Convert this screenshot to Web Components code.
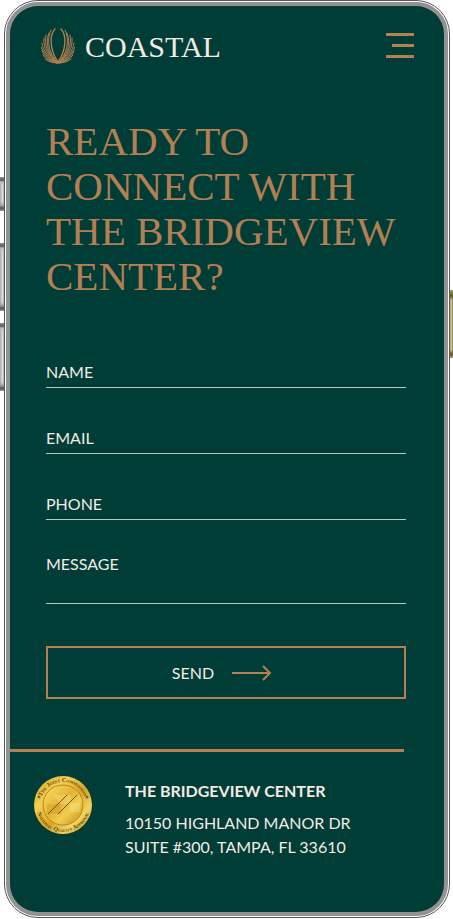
<!DOCTYPE html>
<html lang="en">
<head>
<meta charset="utf-8">
<meta name="viewport" content="width=device-width, initial-scale=1">
<title>Coastal – Contact</title>
<style>
  :root { --green: #003d37; --copper: #b47f52; --cream: #f3ebe3; --rule: #b9c7c2; }
  * { box-sizing: border-box; }
  body { margin: 0; background: #fff; font-family: Lato, "Liberation Sans", sans-serif; font-size: 16px; color: var(--cream); }
</style>
</head>
<body>
<phone-frame>
  <site-header></site-header>
  <main>
    <page-title>READY TO CONNECT WITH THE BRIDGEVIEW CENTER?</page-title>
    <contact-form></contact-form>
  </main>
  <site-footer></site-footer>
</phone-frame>
<script>
const define = (name, html, setup) => {
  const template = document.createElement('template');
  template.innerHTML = html;
  customElements.define(name, class extends HTMLElement {
    constructor() {
      super();
      this.attachShadow({ mode: 'open' }).append(template.content.cloneNode(true));
    }
    connectedCallback() { if (setup) setup(this, this.shadowRoot); }
  });
};

define('phone-frame', `
<style>
  :host { position: relative; min-height: 100vh; padding: 0 3px 1px 4px; box-sizing: border-box; display: flex; }
  .shell { flex: 1; display: flex; border: 1px solid #55555a; border-radius: 34px; background: #fff; padding: 1px; position: relative; min-width: 0; }
  .bezel { flex: 1; display: flex; border: 4px solid #929292; border-radius: 32px; background: #929292; min-width: 0; }
  .screen { flex: 1; background: var(--green); border-radius: 28px; overflow: hidden; min-width: 0; }
  .key { position: absolute; left: 0; width: 5px; box-sizing: border-box;
         background: linear-gradient(#999, #555 3px, #bbb 5px, #0000 9px, #0000 calc(100% - 9px), #999 calc(100% - 5px), #555 calc(100% - 3px), #999), linear-gradient(90deg, #aaa, #ddd 50%, #888); }
  .mute { top: 177px; height: 34px; }
  .up { top: 243px; height: 68px; }
  .down { top: 323px; height: 68px; }
  .power { left: auto; right: 0; width: 4px; top: 290px; height: 68px;
           background: linear-gradient(#a59d5c, #5f5820 6px, #0000 10px, #0000 calc(100% - 8px), #5f5820 calc(100% - 4px), #a59d5c), linear-gradient(90deg, #716a35, #d5cd96 50%, #918542); }
</style>
<i class="key mute"></i><i class="key up"></i><i class="key down"></i><i class="key power"></i>
<div class="shell"><div class="bezel"><div class="screen"><slot></slot></div></div></div>`);

define('coastal-mark', `
<style>:host { display: block; } svg { display: block; fill: none; stroke: var(--copper); stroke-width: 1; stroke-linecap: round; }</style>
<svg width="34" height="36" viewBox="0 0 34 36" aria-hidden="true">
  <defs><g id="half">
    <path d="M14 1C8 7 9 23 17 34" stroke-width="1.3"/>
    <path d="M10 2C5 12 8 26 16 34"/>
    <path d="M8 5C4 14 7 27 16 34"/>
    <path d="M5 7C3 17 7 28 16 34"/>
    <path d="M3 10C2 20 7 29 16 34"/>
    <path d="M1 15C2 23 8 31 16 34"/>
    <path d="M0 19C3 26 9 32 16 35"/>
    <path d="M1 23C4 29 9 33 16 35"/>
    <path d="M2 27C5 31 10 34 16 35"/>
    <path d="M4 31C8 34 12 35 17 35"/>
  </g></defs>
  <use href="#half"/><use href="#half" transform="translate(34) scale(-1 1)"/>
</svg>`);

define('site-header', `
<style>
  :host { display: block; }
  header { display: flex; align-items: center; justify-content: space-between; padding: 22px 30px 0 31px; }
  a { display: flex; align-items: center; gap: 10px; color: var(--cream); text-decoration: none; font: 30px/36px "Liberation Serif", serif; }
  a span { padding-top: 2px; line-height: 34px; }
  button { display: block; border: 0; background: none; padding: 0; color: var(--copper); cursor: pointer; }
  svg { display: block; }
</style>
<header>
  <a href="#home"><coastal-mark></coastal-mark><span>COASTAL</span></a>
  <button type="button" aria-label="Menu"><svg width="28" height="28" fill="currentColor"><path d="M0 1h28v3H0zM6 12h22v3H6zM0 23h28v3H0z"/></svg></button>
</header>`);

define('page-title', `
<style>
  :host { display: block; padding: 55px 36px 0; }
  h1 { margin: 0; color: var(--copper); font: 400 41px/45px "Liberation Serif", serif; }
</style>
<h1><slot></slot></h1>`);

define('form-field', `
<style>
  :host { display: block; }
  div { display: flex; gap: 12px; border-bottom: 1px solid var(--rule); }
  label { line-height: 26px; }
  input, textarea { flex: 1; min-width: 0; height: 28px; margin: 0; padding: 0; box-sizing: border-box; border: 0; outline: 0; background: none; color: inherit; font: inherit; line-height: 26px; resize: none; }
  textarea { height: 52px; }
</style>
<div><label for="control"></label></div>`, (host, root) => {
  const row = root.querySelector('div');
  if (row.children.length > 1) return;
  const type = host.getAttribute('type');
  const control = document.createElement(type === 'message' ? 'textarea' : 'input');
  if (type !== 'message') control.type = type;
  control.id = 'control';
  control.name = host.getAttribute('name');
  row.append(control);
  root.querySelector('label').textContent = host.getAttribute('label');
});

define('contact-form', `
<style>
  :host { display: block; padding: 60px 38px 0 36px; }
  form { display: flex; flex-direction: column; gap: 37px; }
  .last { margin-top: -6px; }
  button { display: flex; align-items: center; justify-content: center; gap: 18px; height: 53px; margin-top: 5px; padding: 0 8px 0 0; border: 2px solid var(--copper); background: none; color: inherit; font: inherit; cursor: pointer; }
  svg { display: block; fill: none; stroke: var(--copper); stroke-width: 2; }
</style>
<form>
  <form-field type="text" name="name" label="NAME"></form-field>
  <form-field type="email" name="email" label="EMAIL"></form-field>
  <form-field type="tel" name="phone" label="PHONE"></form-field>
  <form-field class="last" type="message" name="message" label="MESSAGE"></form-field>
  <button type="submit">SEND <svg width="40" height="16" aria-hidden="true"><path d="M0 8h38M31 1l7 7-7 7"/></svg></button>
</form>`);

define('gold-seal', `
<style>
  :host { display: block; } svg { display: block; }
  text { font: 700 6px "Liberation Serif", serif; font-variant: small-caps; fill: #5d4510; text-anchor: middle; }
</style>
<svg width="60" height="60" viewBox="0 0 60 60" role="img" aria-label="The Joint Commission National Quality Approval">
  <defs>
    <linearGradient id="rim" x2="1" y2="1"><stop stop-color="#d39c20"/><stop offset=".3" stop-color="#f3d050"/><stop offset=".55" stop-color="#d9a526"/><stop offset=".75" stop-color="#f3d562"/><stop offset="1" stop-color="#bb7c0c"/></linearGradient>
    <linearGradient id="disc" x2="1" y2="1"><stop stop-color="#f8e070"/><stop offset=".45" stop-color="#e3b530"/><stop offset=".65" stop-color="#f0cd50"/><stop offset="1" stop-color="#c18a15"/></linearGradient>
    <path id="top" d="M7 30a23 23 0 0 1 46 0"/><path id="bottom" d="M3 30a27 27 0 0 0 54 0"/>
  </defs>
  <circle cx="30" cy="30" r="29" fill="url(#rim)"/>
  <circle cx="30" cy="30" r="20" fill="url(#disc)" stroke="#bc8718"/>
  <path d="M20 20h18v8h9v9H37v-8h-9z" fill="#fff0a0" opacity=".3"/><path d="M14 29h14v10H14z" fill="#c79018" opacity=".3"/>
  <path d="M15 39l19-19M25 39l19-19" stroke="#71521b" stroke-width="1" fill="none"/>
  <text><textPath href="#top" startOffset="50%">The Joint Commission</textPath></text>
  <text><textPath href="#bottom" startOffset="50%">National Quality Approval</textPath></text>
  <g fill="#84651e"><circle cx="6" cy="22" r="1.5"/><circle cx="54" cy="22" r="1.5"/></g>
</svg>`);

define('site-footer', `
<style>
  :host { display: block; padding-top: 50px; }
  footer { display: flex; align-items: flex-start; gap: 32px; padding: 23px 22px 32px 23px; }
  hr { margin: 0 40px 0 0; border: 0; height: 3px; background: var(--copper); }
  strong { display: block; line-height: 24px; margin: 4px 0 8px; }
  address { font-style: normal; line-height: 24px; }
</style>
<hr>
<footer>
  <gold-seal></gold-seal>
  <div><strong>THE BRIDGEVIEW CENTER</strong><address>10150 HIGHLAND MANOR DR<br>SUITE #300, TAMPA, FL 33610</address></div>
</footer>`);
</script>
</body>
</html>
